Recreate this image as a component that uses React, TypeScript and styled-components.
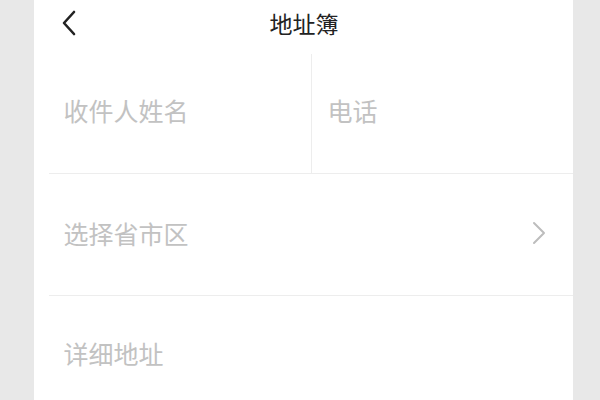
import styled, { createGlobalStyle } from 'styled-components';

const GlobalStyle = createGlobalStyle`
  html, body {
    margin: 0;
    padding: 0;
    background: #e8e8e8;
  }
  body {
    font-family: 'Noto Sans CJK SC', 'Noto Sans', sans-serif;
  }
`;

const BackIcon = () => (
  <svg width="16" height="26" viewBox="0 0 16 26">
    <path d="M13 2 L3 13 L13 24" fill="none" stroke="#222" strokeWidth="2.6" strokeLinecap="round" strokeLinejoin="round" />
  </svg>
);

const ArrowIcon = () => (
  <svg width="16" height="24" viewBox="0 0 16 24">
    <path d="M3 2 L13 12 L3 22" fill="none" stroke="#bdbdbd" strokeWidth="2" strokeLinecap="round" strokeLinejoin="round" />
  </svg>
);

export default function App() {
  return (
    <>
      <GlobalStyle />
      <Page>
        <Panel>
          <Header>
            <BackButton>
              <BackIcon />
            </BackButton>
            <Title>地址簿</Title>
          </Header>
          <Form>
            <Row height={123}>
              <Field width={263} divider>
                <Placeholder>收件人姓名</Placeholder>
              </Field>
              <Field pad={16}>
                <Placeholder>电话</Placeholder>
              </Field>
            </Row>
            <Row height={121}>
              <Field>
                <Placeholder>选择省市区</Placeholder>
              </Field>
              <Chevron>
                <ArrowIcon />
              </Chevron>
            </Row>
            <Row height={116} last>
              <Field>
                <Placeholder>详细地址</Placeholder>
              </Field>
            </Row>
          </Form>
        </Panel>
      </Page>
    </>
  );
}

const Page = styled.div`
  width: 600px;
  height: 400px;
  overflow: hidden;
  display: flex;
  justify-content: center;
  background: #e8e8e8;
`;

const Panel = styled.div`
  width: 539px;
  margin-left: 6px;
  background: #fff;
  display: flex;
  flex-direction: column;
`;

const Header = styled.div`
  position: relative;
  height: 50px;
  flex-shrink: 0;
  display: flex;
  align-items: center;
  justify-content: center;
`;

const BackButton = styled.div`
  position: absolute;
  left: 27px;
  top: 10px;
  display: flex;
`;

const Title = styled.div`
  font-size: 23px;
  color: #222;
  margin-left: 2px;
  margin-top: -4px;
`;

const Form = styled.div`
  padding-left: 15px;
  flex-shrink: 0;
  display: flex;
  flex-direction: column;
`;

const Row = styled.div<{ height: number; last?: boolean }>`
  height: ${(p) => p.height}px;
  flex-shrink: 0;
  display: flex;
  align-items: stretch;
  border-bottom: ${(p) => (p.last ? 'none' : '1px solid #ededed')};
`;

const Field = styled.div<{ width?: number; divider?: boolean; pad?: number }>`
  ${(p) => (p.width ? `width: ${p.width}px;` : 'flex: 1;')}
  display: flex;
  align-items: center;
  padding-left: ${(p) => p.pad ?? 15}px;
  box-sizing: border-box;
  position: relative;
  ${(p) =>
    p.divider
      ? `&::after {
    content: '';
    position: absolute;
    right: 0;
    top: 4px;
    bottom: 0;
    width: 1px;
    background: #ededed;
  }`
      : ''}
`;

const Placeholder = styled.span`
  font-size: 25px;
  color: #c2c2c2;
  margin-top: -3px;
`;

const Chevron = styled.div`
  display: flex;
  align-items: center;
  padding-right: 26px;
  padding-bottom: 4px;
`;
